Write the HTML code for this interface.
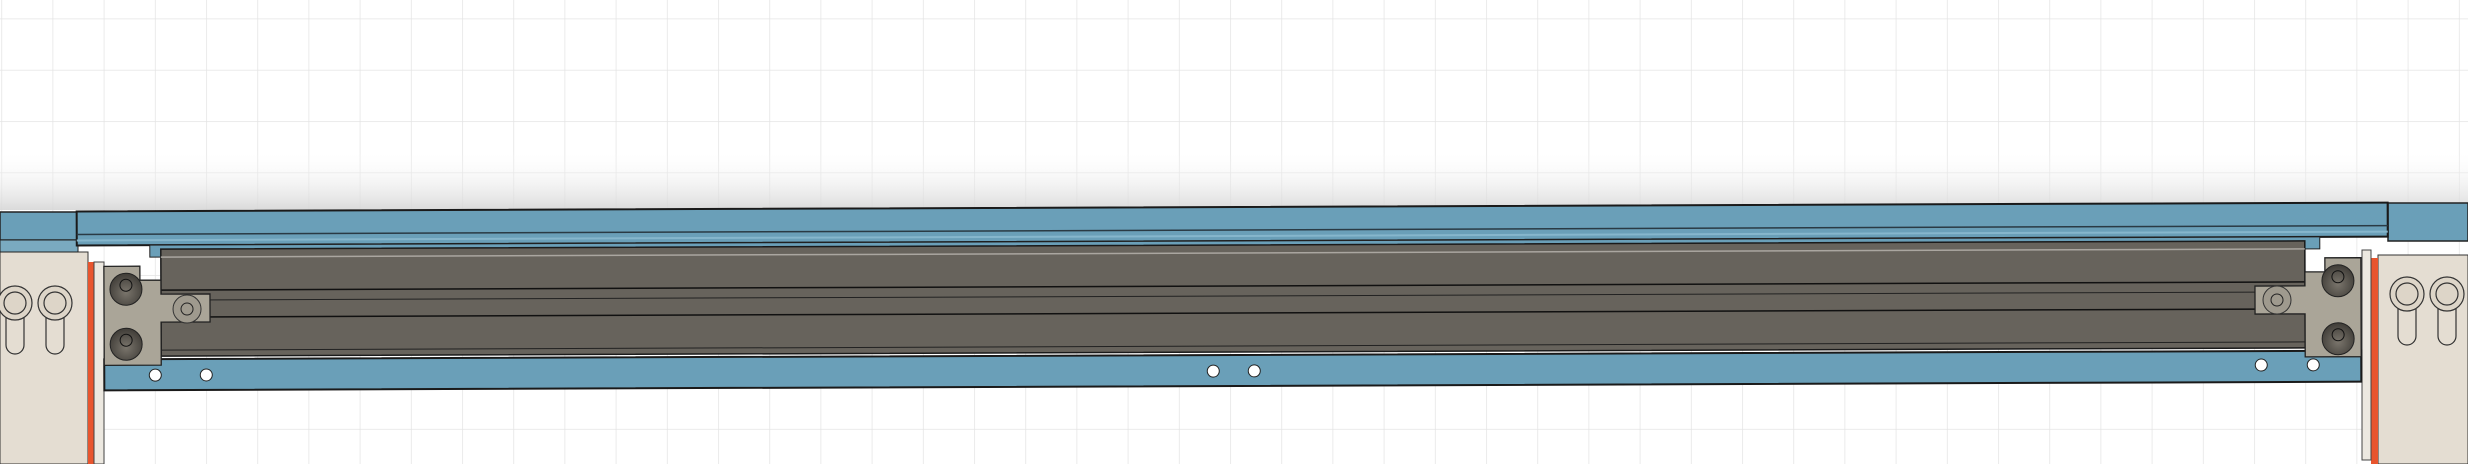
<!DOCTYPE html>
<html><head><style>html,body{margin:0;padding:0;background:#fff;width:2468px;height:464px;overflow:hidden}</style></head>
<body>
<svg width="2468" height="464" viewBox="0 0 2468 464" xmlns="http://www.w3.org/2000/svg">
<defs>
<pattern id="g" x="52.5" y="18.5" width="51.2" height="51.3" patternUnits="userSpaceOnUse">
<path d="M0 0V51.3M0 0H51.2" stroke="#e4e4e4" stroke-width="1.5" fill="none"/>
</pattern>
<linearGradient id="sh" x1="0" y1="0" x2="0" y2="1">
<stop offset="0" stop-color="#fff" stop-opacity="0"/>
<stop offset="1" stop-color="#d6d6d6" stop-opacity="0.9"/>
</linearGradient>
<radialGradient id="bolt" cx="0.5" cy="0.6" r="0.6">
<stop offset="0" stop-color="#7a756c"/><stop offset="1" stop-color="#3f3c37"/>
</radialGradient>
</defs>
<rect width="2468" height="464" fill="#fff"/>
<rect width="2468" height="464" fill="url(#pattern)"/>
<rect width="2468" height="464" fill="url(#g)"/>
<rect x="0" y="150" width="2468" height="60" fill="url(#sh)"/>

<!-- left plate -->
<rect x="0" y="252" width="88" height="212" fill="#e4ddd2" stroke="#333" stroke-width="1"/>
<rect x="88" y="262" width="6" height="202" fill="#e8552e"/>
<rect x="94" y="262" width="10" height="202" fill="#ece8e0" stroke="#444" stroke-width="1"/>
<rect x="0" y="212" width="78" height="28" fill="#6a9fb8" stroke="#222" stroke-width="1.5"/>
<rect x="0" y="240" width="78" height="12" fill="#7aaac0" stroke="#222" stroke-width="1"/>
<g fill="none" stroke="#333" stroke-width="1.2">
<circle cx="15" cy="303" r="17" fill="#ddd5c8"/><circle cx="15" cy="303" r="11"/>
<circle cx="55" cy="303" r="17" fill="#ddd5c8"/><circle cx="55" cy="303" r="11"/>
<path d="M6 318V345a9 9 0 0 0 18 0V318M46 318V345a9 9 0 0 0 18 0V318"/>
</g>

<!-- right plate -->
<rect x="2378" y="255" width="90" height="209" fill="#e4ddd2" stroke="#333" stroke-width="1"/>
<rect x="2371" y="258" width="7" height="206" fill="#e8552e"/>
<rect x="2362" y="250" width="9" height="210" fill="#ece8e0" stroke="#444" stroke-width="1"/>
<rect x="2388" y="203" width="80" height="38" fill="#6a9fb8" stroke="#222" stroke-width="1.5"/>
<g fill="none" stroke="#333" stroke-width="1.2">
<circle cx="2407" cy="294" r="17" fill="#ddd5c8"/><circle cx="2407" cy="294" r="11"/>
<circle cx="2447" cy="294" r="17" fill="#ddd5c8"/><circle cx="2447" cy="294" r="11"/>
<path d="M2398 309V336a9 9 0 0 0 18 0V309M2438 309V336a9 9 0 0 0 18 0V309"/>
</g>

<g transform="rotate(-0.22 1234 300)">
<!-- top bar -->
<rect x="77" y="207" width="2311" height="34" fill="#6a9fb8" stroke="#1a1a1a" stroke-width="2"/>
<line x1="77" y1="230" x2="2388" y2="230" stroke="#2a3a44" stroke-width="1.5"/>
<line x1="77" y1="236" x2="2388" y2="236" stroke="#86b6cc" stroke-width="2"/>
<rect x="150" y="241" width="2170" height="12" fill="#6a9fb8" stroke="#222" stroke-width="1"/>
<!-- extrusion -->
<rect x="161" y="245" width="2144" height="107" fill="#67635c" stroke="#1a1a1a" stroke-width="1.5"/>
<line x1="161" y1="253" x2="2305" y2="253" stroke="#aaa6a0" stroke-width="1.5"/>
<line x1="161" y1="286" x2="2305" y2="286" stroke="#111" stroke-width="1.5"/>
<line x1="161" y1="296" x2="2305" y2="296" stroke="#222" stroke-width="1"/>
<line x1="161" y1="313" x2="2305" y2="313" stroke="#111" stroke-width="1.5"/>
<line x1="161" y1="346" x2="2305" y2="346" stroke="#222" stroke-width="1"/>
<!-- bottom bar -->
<rect x="104" y="355" width="2257" height="31" fill="#6a9fb8" stroke="#1a1a1a" stroke-width="2"/>
<g fill="#fff" stroke="#222" stroke-width="1">
<circle cx="155" cy="371" r="6"/><circle cx="206" cy="371" r="6"/>
<circle cx="1213" cy="371" r="6"/><circle cx="1254" cy="371" r="6"/>
<circle cx="2261" cy="369" r="6"/><circle cx="2313" cy="369" r="6"/>
</g>
<!-- left bracket -->
<path d="M104 262H140V276H161V290H210V318H161V361H104Z" fill="#aaa598" stroke="#222" stroke-width="1.3"/>
<circle cx="126" cy="285" r="16" fill="url(#bolt)" stroke="#222"/><circle cx="126" cy="281" r="6" fill="none" stroke="#111"/>
<circle cx="126" cy="340" r="16" fill="url(#bolt)" stroke="#222"/><circle cx="126" cy="336" r="6" fill="none" stroke="#111"/>
<circle cx="187" cy="305" r="14" fill="#9f9a8e" stroke="#333"/><circle cx="187" cy="305" r="6" fill="none" stroke="#222"/>
<!-- right bracket -->
<path d="M2361 262H2325V276H2305V290H2255V318H2305V361H2361Z" fill="#aaa598" stroke="#222" stroke-width="1.3"/>
<circle cx="2338" cy="285" r="16" fill="url(#bolt)" stroke="#222"/><circle cx="2338" cy="281" r="6" fill="none" stroke="#111"/>
<circle cx="2338" cy="343" r="16" fill="url(#bolt)" stroke="#222"/><circle cx="2338" cy="339" r="6" fill="none" stroke="#111"/>
<circle cx="2277" cy="304" r="14" fill="#9f9a8e" stroke="#333"/><circle cx="2277" cy="304" r="6" fill="none" stroke="#222"/>
</g>
</svg>
</body></html>
